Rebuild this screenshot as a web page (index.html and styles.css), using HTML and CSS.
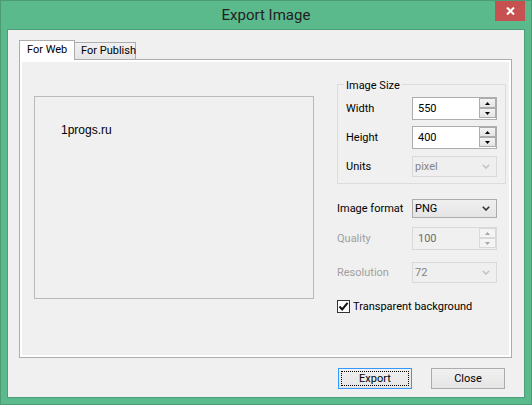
FILE: index.html
```html
<!DOCTYPE html>
<html>
<head>
<meta charset="utf-8">
<title>Export Image</title>
<link rel="stylesheet" href="styles.css">
</head>
<body>
<div class="window">
  <div class="titlebar">
    <span></span>
    <div class="title">Export Image</div>
    <div class="close-btn">
      <svg width="9" height="8" viewBox="0 0 9 8"><path d="M1 0.5 L8 7.5 M8 0.5 L1 7.5" stroke="#fff" stroke-width="2" fill="none"/></svg>
    </div>
  </div>
  <div class="client">
    <div class="tabs">
      <div class="tab active">For Web</div>
      <div class="tab">For Publish</div>
    </div>
    <div class="panel">
      <div class="preview">1progs.ru</div>
      <div class="settings">
        <div class="group">
          <div class="group-title">Image Size</div>
          <div class="row">
            <span class="lbl">Width</span>
            <div class="field spin">
              <span class="val">550</span>
              <div class="spin-btns">
                <div class="spin-btn"><svg width="5" height="3" viewBox="0 0 5 3"><path d="M2.5 0 L5 3 L0 3Z"/></svg></div>
                <div class="spin-btn"><svg width="5" height="3" viewBox="0 0 5 3"><path d="M0 0 L5 0 L2.5 3Z"/></svg></div>
              </div>
            </div>
          </div>
          <div class="row">
            <span class="lbl">Height</span>
            <div class="field spin">
              <span class="val">400</span>
              <div class="spin-btns">
                <div class="spin-btn"><svg width="5" height="3" viewBox="0 0 5 3"><path d="M2.5 0 L5 3 L0 3Z"/></svg></div>
                <div class="spin-btn"><svg width="5" height="3" viewBox="0 0 5 3"><path d="M0 0 L5 0 L2.5 3Z"/></svg></div>
              </div>
            </div>
          </div>
          <div class="row row-units">
            <span class="lbl">Units</span>
            <div class="combo disabled tall">
              <span>pixel</span>
              <svg width="8" height="5" viewBox="0 0 8 5"><path d="M0.8 0.8 L4 4 L7.2 0.8" stroke="#c4c4c4" stroke-width="1.6" fill="none"/></svg>
            </div>
          </div>
        </div>
        <div class="row row-format">
          <span class="lbl wide">Image format</span>
          <div class="combo">
            <span>PNG</span>
            <svg width="8" height="5" viewBox="0 0 8 5"><path d="M0.8 0.8 L4 4 L7.2 0.8" stroke="#333" stroke-width="1.6" fill="none"/></svg>
          </div>
        </div>
        <div class="row row-quality">
          <span class="lbl wide dim">Quality</span>
          <div class="field spin disabled">
            <span class="val">100</span>
            <div class="spin-btns">
              <div class="spin-btn"><svg width="5" height="3" viewBox="0 0 5 3"><path d="M2.5 0 L5 3 L0 3Z"/></svg></div>
              <div class="spin-btn"><svg width="5" height="3" viewBox="0 0 5 3"><path d="M0 0 L5 0 L2.5 3Z"/></svg></div>
            </div>
          </div>
        </div>
        <div class="row row-res">
          <span class="lbl wide dim">Resolution</span>
          <div class="combo disabled tall">
            <span>72</span>
            <svg width="8" height="5" viewBox="0 0 8 5"><path d="M0.8 0.8 L4 4 L7.2 0.8" stroke="#c4c4c4" stroke-width="1.6" fill="none"/></svg>
          </div>
        </div>
        <div class="row row-check">
          <div class="check">
            <svg width="11" height="11" viewBox="0 0 11 11"><path d="M1.5 5.5 L4.2 8.4 L9.6 1.8" stroke="#111" stroke-width="2" fill="none"/></svg>
          </div>
          <span class="check-label">Transparent background</span>
        </div>
      </div>
    </div>
    <div class="buttons">
      <button class="btn default">Export</button>
      <button class="btn">Close</button>
    </div>
  </div>
</div>
</body>
</html>
```
FILE: styles.css
```css
* { box-sizing: border-box; }
html, body { margin: 0; padding: 0; }
body {
  width: 532px;
  height: 405px;
  overflow: hidden;
  font-family: Roboto, "Noto Sans", sans-serif;
  font-size: 11px;
  color: #000;
  background: #fff;
}
.window {
  width: 532px;
  height: 405px;
  border: 1px solid #4a9b76;
  background: #5aba8c;
  padding: 0 6px 6px 6px;
  display: flex;
  flex-direction: column;
}
.titlebar {
  height: 28px;
  flex: none;
  display: grid;
  grid-template-columns: 1fr auto 1fr;
}
.title {
  font-size: 15px;
  line-height: 28px;
  color: #222;
}
.close-btn {
  justify-self: end;
  align-self: start;
  width: 30px;
  height: 20px;
  background: #c75050;
  display: flex;
  align-items: center;
  justify-content: center;
}
.close-btn svg { display: block; }
.client {
  flex: 1;
  border: 1px solid #4c9e78;
  background: #f0f0f0;
  padding: 10px 12px 8px 11px;
  display: flex;
  flex-direction: column;
}
.tabs {
  height: 19px;
  flex: none;
  display: flex;
  align-items: flex-end;
}
.tab {
  width: 62px;
  height: 17px;
  border: 1px solid #adadad;
  border-bottom: none;
  margin-left: -1px;
  padding-left: 6px;
  line-height: 16px;
  background: linear-gradient(#f0f0f0, #e5e5e5);
  white-space: nowrap;
}
.tab.active {
  width: 56px;
  height: 20px;
  margin-left: 0;
  margin-bottom: -1px;
  padding-left: 7px;
  line-height: 17px;
  background: #fff;
  z-index: 1;
}
.panel {
  height: 299px;
  flex: none;
  border: 1px solid #adadad;
  background: #f0f0f0;
  box-shadow: inset 0 0 0 2px #fff;
  padding: 24px 0 0 14px;
  display: flex;
  align-items: flex-start;
  gap: 23px;
}
.preview {
  width: 280px;
  height: 203px;
  margin-top: 12px;
  border: 1px solid #bababa;
  padding: 26px 0 0 26px;
  font-family: "Liberation Sans", Arial, sans-serif;
  font-size: 12px;
  line-height: 14px;
}
.settings {
  width: 169px;
  display: flex;
  flex-direction: column;
}
.group {
  border: 1px solid #dcdcdc;
  padding: 0 8px 6px 8px;
  display: flex;
  flex-direction: column;
}
.group-title {
  align-self: flex-start;
  margin: -7px 0 0 -2px;
  padding: 0 2px;
  line-height: 16px;
  background: #f0f0f0;
}
.row {
  display: flex;
  align-items: center;
}
.group .row { margin-top: 6px; }
.group .group-title + .row { margin-top: 3px; }
.group .row-units { margin-top: 7px; }
.lbl { width: 66px; flex: none; }
.lbl.wide { width: 75px; }
.lbl.dim { color: #a0a0a0; }
.field {
  width: 85px;
  height: 23px;
  border: 1px solid #abadb3;
  background: #fff;
  display: flex;
  align-items: center;
  padding-left: 5px;
}
.field .val { flex: 1; }
.spin-btns {
  width: 17px;
  align-self: stretch;
  display: flex;
  flex-direction: column;
}
.spin-btn {
  height: 10px;
  border: 1px solid #acacac;
  background: linear-gradient(#f3f3f3, #e4e4e4);
  display: flex;
  align-items: center;
  justify-content: center;
}
.spin-btn svg { display: block; fill: #000; }
.field.disabled {
  border-color: #d9d9d9;
  background: #f0f0f0;
  color: #6d6d6d;
}
.field.disabled .spin-btn {
  border-color: #d9d9d9;
  background: #f4f4f4;
}
.field.disabled .spin-btn svg { fill: #a6a6a6; }
.combo {
  width: 85px;
  height: 19px;
  border: 1px solid #acacac;
  background: linear-gradient(#f0f0f0, #e5e5e5);
  display: flex;
  align-items: center;
  justify-content: space-between;
  padding: 0 6px 0 2px;
}
.combo.tall { height: 21px; }
.combo.disabled {
  border-color: #d9d9d9;
  background: #efefef;
  color: #838383;
}
.combo svg { display: block; }
.row-format { margin-top: 15px; }
.row-quality { margin-top: 9px; }
.row-res { margin-top: 12px; }
.row-check { margin-top: 16px; height: 15px; gap: 3px; }
.check {
  width: 13px;
  height: 13px;
  border: 1px solid #333;
  background: #fff;
  display: flex;
  align-items: center;
  justify-content: center;
}
.check svg { display: block; }
.buttons {
  margin-top: 10px;
  padding-right: 7px;
  display: flex;
  justify-content: flex-end;
  gap: 19px;
}
.btn {
  width: 74px;
  height: 21px;
  border: 1px solid #acacac;
  background: linear-gradient(#f0f0f0, #e5e5e5);
  font-family: inherit;
  font-size: 11px;
  color: #000;
  padding: 0;
  margin: 0;
}
.btn.default {
  border-color: #3399ff;
  outline: 1px dotted #000;
  outline-offset: -4px;
}
```
